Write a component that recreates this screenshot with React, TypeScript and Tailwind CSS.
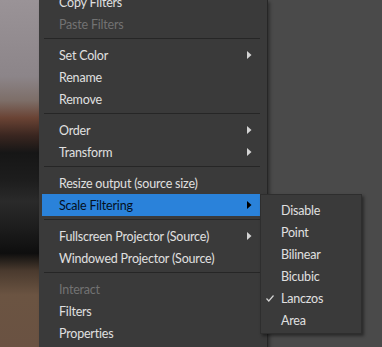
import React from 'react';

type Item =
  | { kind: 'sep' }
  | { kind: 'item'; label: string; disabled?: boolean; arrow?: boolean; active?: boolean };

const items: Item[] = [
  { kind: 'item', label: 'Copy Filters' },
  { kind: 'item', label: 'Paste Filters', disabled: true },
  { kind: 'sep' },
  { kind: 'item', label: 'Set Color', arrow: true },
  { kind: 'item', label: 'Rename' },
  { kind: 'item', label: 'Remove' },
  { kind: 'sep' },
  { kind: 'item', label: 'Order', arrow: true },
  { kind: 'item', label: 'Transform', arrow: true },
  { kind: 'sep' },
  { kind: 'item', label: 'Resize output (source size)' },
  { kind: 'item', label: 'Scale Filtering', arrow: true, active: true },
  { kind: 'sep' },
  { kind: 'item', label: 'Fullscreen Projector (Source)', arrow: true },
  { kind: 'item', label: 'Windowed Projector (Source)' },
  { kind: 'sep' },
  { kind: 'item', label: 'Interact', disabled: true },
  { kind: 'item', label: 'Filters' },
  { kind: 'item', label: 'Properties' },
];

const filters = ['Disable', 'Point', 'Bilinear', 'Bicubic', 'Lanczos', 'Area'];

function Arrow({ dark }: { dark?: boolean }) {
  return (
    <svg width="5" height="8" viewBox="0 0 5 8" className="shrink-0">
      <polygon points="0,0 4.5,4 0,8" fill={dark ? '#000000' : '#d4d4d4'} />
    </svg>
  );
}

export default function App() {
  return (
    <div
      className="relative flex w-[382px] h-[347px] overflow-hidden bg-[#4a4a4a] text-[12.5px] tracking-[-0.2px] text-[#e0e0e0]"
      style={{ fontFamily: 'Lato, "Noto Sans", sans-serif' }}
    >
      {/* blurred preview behind the menu */}
      <div className="w-[39px] shrink-0 bg-[linear-gradient(180deg,#9a9397_0%,#8c8589_22%,#7d6e68_29%,#6a4334_34%,#3a2620_39%,#161616_44%,#1d1d1d_52%,#2a2a2a_58%,#1c1c1c_66%,#0e0e0e_73%,#4a3a2e_78%,#6b5442_85%,#6a5242_100%)]" />

      <div className="w-[229px] shrink-0 bg-[#3a3a3a] border-r border-[#262626] shadow-[2px_2px_3px_rgba(0,0,0,0.35)] z-10">
        <div className="-mt-[9px]">
          {items.map((it, i) =>
            it.kind === 'sep' ? (
              <div key={i} className="ml-[5px] mr-[7px] mt-[3px] mb-[5px] h-px bg-[#262626]" />
            ) : (
              <div
                key={i}
                className={`ml-[3px] mr-[7px] h-[22px] pl-[17px] pr-[8px] flex items-center justify-between whitespace-nowrap ${
                  it.active ? 'bg-[#2a82da] text-[#04101e]' : it.disabled ? 'text-[#727272]' : ''
                }`}
              >
                <span className="pt-[3px]">{it.label}</span>
                {it.arrow && <Arrow dark={it.active} />}
              </div>
            )
          )}
        </div>
      </div>

      <div className="flex-1" />

      {/* submenu for Scale Filtering */}
      <div className="absolute left-[260px] top-[194px] w-[102px] pt-[4px] pb-[2px] bg-[#3a3a3a] border border-[#2e2e2e] shadow-[2px_2px_3px_rgba(0,0,0,0.45)] z-20">
        {filters.map((f) => (
          <div key={f} className="h-[22px] flex items-center pl-[20px] relative">
            {f === 'Lanczos' && (
              <svg width="8" height="7" viewBox="0 0 8 7" className="absolute left-[5px] top-[8px]">
                <polyline points="0.5,3.5 2.8,6 7.5,0.5" fill="none" stroke="#d4d4d4" strokeWidth="1.2" />
              </svg>
            )}
            <span className="pt-[3px]">{f}</span>
          </div>
        ))}
      </div>
    </div>
  );
}
